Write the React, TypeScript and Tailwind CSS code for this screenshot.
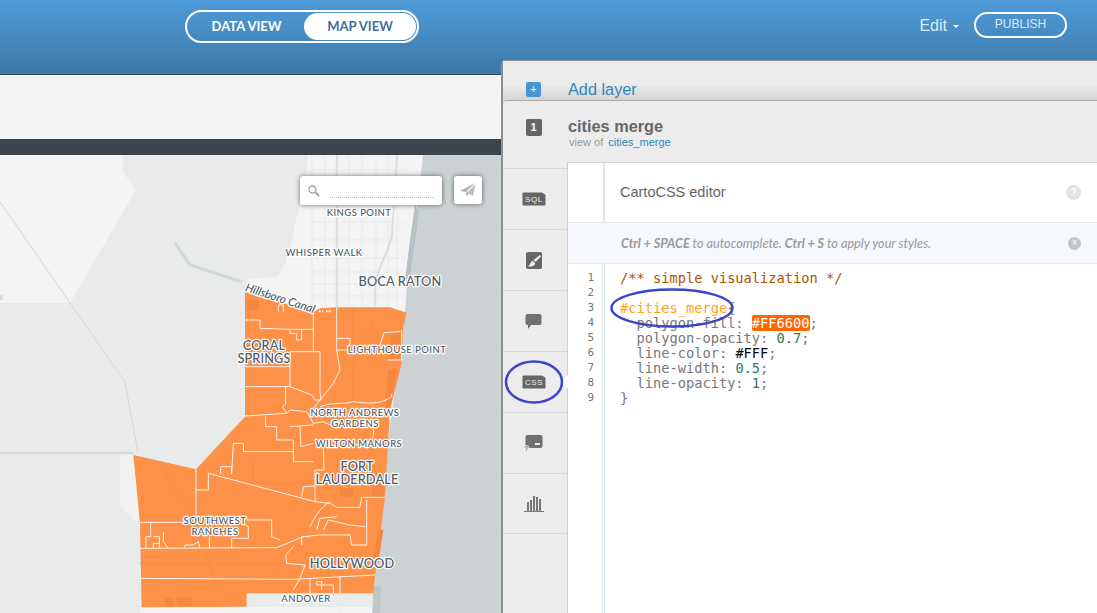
import React from 'react';

const sans = 'font-["Liberation_Sans",Arial,sans-serif]';

// white boundaries of the polygon, in coordinates of a 3x crop, see the group transform below
const boundaries = [
  'M375 150H420V175L510 178H580',
  'M580 125V245H600V370L604 392',
  'M510 245H580M510 245V350',
  'M375 290H510M375 350H510L575 375L585 390L600 390',
  'M650 112V240L660 300L640 340L600 390L580 415',
  'M650 205H690V240H650',
  'M497 350V400L488 410L500 430L375 438',
  'M500 430L510 420L560 425L580 460L610 455L640 470',
  'M437 438V470H470V510H520V575H580',
  'M510 470L580 465M540 470L543 530L580 520',
  'M340 520H370V545H520M340 520L335 612',
  'M228 598V660H265V610L585 695',
  'M302 612V590H335V612',
  'M228 660V760M268 800V835',
  'M585 520L610 530L612 600H585V695',
  'M550 650L585 648M550 650L545 680',
  'M585 695L630 700L650 712H720L725 682H795',
  'M60 757H190M380 750H455V800L480 810',
  'M60 835L470 833L550 800L600 795H690L695 825H740V690',
  'M60 925L520 928L765 915',
  'M497 855L500 880L555 885L540 925L520 960M497 855L520 830',
  'M570 925V970M660 920V970M590 945H640V970M590 945V935H605V960',
  'M92 757V800H78V835M100 800H118V835M100 835V820H118M130 785V815L145 835',
  'M195 835V825H220L235 815L240 835M335 835V805H385V770L370 760',
  'M700 395C740 400 780 405 815 380V372',
  'M600 410C640 395 670 405 700 395M760 470V500C740 530 700 530 660 510',
  'M570 770C590 730 600 715 630 695M590 780L600 745L650 740M610 780L625 750L690 765L735 770',
  'M780 225L792 188L840 185M805 270H845V180',
  'M490 125V105H475V125',
  'M545 825V800H570M510 180V190H530V210H545V178',
];

const cityGridV = [312, 325, 336, 349, 362, 376, 388, 397];
const cityGridH = [170, 185, 203, 222, 240, 258, 272, 284, 296];

const MapCanvas = () => (
  <svg viewBox="0 155 502 458" className="block h-[458px] w-[502px]">
    <rect x="0" y="155" width="502" height="458" fill="#e9ebea" />
    <path d="M0 155H123V172L136 190L70 303H0Z" fill="#f4f4f2" />
    <path d="M308 155C306 180 300 205 296 220C292 240 290 260 277 277L248 279L245 292L245 420H402L423 155Z" fill="#f4f4f4" />
    <path d="M120 455H140L146 520L135 521L120 505Z" fill="#f1f2f1" />
    <path d="M140 607H372V613H140Z" fill="#f3f3f3" />
    <path d="M423 155L417 210L408 270L405 312L387 450L377 563L372 613H502V155Z" fill="#ccd1d3" />
    <path d="M415 205L419 212L412 262L409 285L405 280L410 240Z" fill="#b7c0c2" />
    <path d="M373 586H381L380 613H373Z" fill="#c0c6c8" />

    <g stroke="#e8e9e9" strokeWidth="1" fill="none">
      {cityGridV.map((x) => (
        <line key={x} x1={x} y1="155" x2={x} y2="307" />
      ))}
      {cityGridH.map((y) => (
        <line key={y} x1="312" y1={y} x2="405" y2={y} />
      ))}
      <path d="M312 595H372M312 606H372M340 595V613" />
    </g>
    <path d="M337 155V307" stroke="#dfdfdf" strokeWidth="2" fill="none" />
    <path d="M397 155L392 235C390 250 378 265 375 285V305" stroke="#dcdddd" strokeWidth="2" fill="none" />
    <path d="M0 202L125 382L138 453" stroke="#d4d6d4" strokeWidth="1" fill="none" />
    <path d="M0 453H133" stroke="#d8dad9" strokeWidth="2" fill="none" />
    <path d="M175 243L190 265L242 282" stroke="#d3d9da" strokeWidth="3" fill="none" />
    <rect x="0" y="295" width="3" height="5" fill="#dcdedc" />

    <g transform="translate(120 270) scale(0.33333)">
      <path
        d="M375 65L580 125L600 115L650 112H810L860 128L850 170L845 280L810 420L795 680L770 880L760 970H380V1010L65 1012L60 760L40 555L228 598L375 440Z"
        fill="#fd9148"
      />
      <g fill="#f6873f">
        <path d="M815 190H845L840 270H808Z" />
        <path d="M805 300H830L810 420H795Z" />
        <path d="M660 655H700V680H660Z" />
        <path d="M760 640H795L790 680H755Z" />
        <path d="M775 780H790L775 880H760Z" />
        <path d="M135 985H160V1010H135ZM170 980H215V1008H170Z" />
        <path d="M380 90H415V120H380Z" />
      </g>
      <g stroke="#f88b44" strokeWidth="3" fill="none">
        <path d="M60 880H490M380 640H580M400 570V640M130 600C160 660 180 700 220 720M260 850L290 960M700 112V390M760 150L700 300" />
      </g>
      <g stroke="#fff5ee" strokeWidth="3" fill="none">
        {boundaries.map((d) => (
          <path key={d} d={d} />
        ))}
      </g>
      <path d="M597 124H636" stroke="#fff" strokeWidth="6" strokeDasharray="5 4 3 8 6 3" fill="none" />
    </g>

    <g
      className='font-["Lato",sans-serif]'
      fill="#4d5b69"
      stroke="#ffffff"
      strokeWidth="2.5"
      strokeLinejoin="round"
      paintOrder="stroke"
      textAnchor="middle"
      fontWeight="500"
    >
      <g fontSize="9.5" letterSpacing="0.45">
        <text x="359" y="216">KINGS POINT</text>
        <text x="324" y="256">WHISPER WALK</text>
        <text x="397" y="353">LIGHTHOUSE POINT</text>
        <text x="355" y="416">NORTH ANDREWS</text>
        <text x="355" y="427">GARDENS</text>
        <text x="359" y="447">WILTON MANORS</text>
        <text x="215" y="524">SOUTHWEST</text>
        <text x="215" y="535">RANCHES</text>
        <text x="306" y="602">ANDOVER</text>
      </g>
      <g fontSize="12.8" letterSpacing="0.1">
        <text x="400" y="286">BOCA RATON</text>
        <text x="264" y="350">CORAL</text>
        <text x="264" y="363">SPRINGS</text>
        <text x="357" y="471">FORT</text>
        <text x="357" y="484">LAUDERDALE</text>
        <text x="352" y="568">HOLLYWOOD</text>
      </g>
      <text x="279" y="302" fontSize="11.5" fontStyle="italic" transform="rotate(18 279 302)">Hillsboro Canal</text>
    </g>
  </svg>
);

const TabIcon = ({ name }: { name: string }) => {
  if (name === 'sql' || name === 'css') {
    return (
      <svg width="24" height="14" viewBox="0 0 24 14">
        <path d="M1 1H20L23 3V13H1Z" fill="#666" stroke="#666" strokeLinejoin="round" />
        <text x="12" y="10" textAnchor="middle" fontSize="8" letterSpacing="0.6" fill="#eee" className={sans}>
          {name.toUpperCase()}
        </text>
      </svg>
    );
  }
  if (name === 'brush') {
    return (
      <svg width="16" height="17" viewBox="0 0 16 17">
        <rect width="16" height="17" rx="2" fill="#666" />
        <path d="M14 3L7.500 8L9.500 10L15 4.500Z" fill="#eee" />
        <path d="M7 9C4 9 5.500 12.500 2 14C5.500 15.500 9.500 13.500 9 11Z" fill="#eee" />
      </svg>
    );
  }
  if (name === 'comment') {
    return (
      <svg width="17" height="17" viewBox="0 0 17 17">
        <path d="M2.500 1H14.500A2 2 0 0 1 16.500 3V10A2 2 0 0 1 14.500 12H6L3 16V12H2.500A2 2 0 0 1 .5 10V3A2 2 0 0 1 2.500 1Z" fill="#707070" />
      </svg>
    );
  }
  if (name === 'legend') {
    return (
      <svg width="19" height="16" viewBox="0 0 19 16">
        <rect x="1.500" y="0" width="17" height="13" rx="2" fill="#707070" />
        <rect x="11" y="8" width="5" height="2" fill="#eee" />
        <text x="2.500" y="15.500" textAnchor="middle" fontSize="8" fontWeight="700" fill="#8a8a8a" stroke="#ececec" strokeWidth="1.500" paintOrder="stroke" className={sans}>
          ?
        </text>
      </svg>
    );
  }
  return (
    <svg width="20" height="16" viewBox="0 0 20 16">
      <path d="M0 15.500H20" stroke="#777" />
      <rect x="3" y="6" width="2" height="9" fill="#777" />
      <rect x="6" y="4" width="2" height="11" fill="#777" />
      <rect x="9" y="0" width="2" height="15" fill="#777" />
      <rect x="12" y="1" width="2" height="14" fill="#777" />
      <rect x="15" y="3" width="2" height="12" fill="#777" />
    </svg>
  );
};

const tabs = ['sql', 'brush', 'comment', 'css', 'legend', 'bars'];

const CodeLine = ({ n, children }: { n: number; children?: React.ReactNode }) => (
  <div className="flex h-[15px] items-center">
    <span className="w-[34px] shrink-0 pr-[9px] text-right text-[11px] text-[#777]">{n}</span>
    <span className="ml-[17px] whitespace-pre">{children}</span>
  </div>
);

const App = () => {
  return (
    <div className={`relative flex h-[613px] w-[1097px] flex-col overflow-hidden bg-white ${sans}`}>
      <header className="flex h-[75px] shrink-0 items-start border-b border-[#32485c] bg-gradient-to-b from-[#4f9cd9] to-[#3c78aa] pl-[185px] pr-[30px] pt-[10px]">
        <div className="flex h-[33px] w-[234px] items-center rounded-full border-2 border-white p-[1px] font-['Lato',sans-serif] text-[13px] font-bold">
          <span className="flex-1 pl-[1px] text-center text-white">DATA VIEW</span>
          <span className="flex h-full w-[112px] items-center justify-center rounded-full bg-white text-[#3f6d9c]">
            MAP VIEW
          </span>
        </div>
        <div className="ml-auto flex items-center pt-[1px]">
          <span className="mt-[3px] text-[16px] font-light text-[#dceaf5]">Edit</span>
          <span className="ml-[6px] mt-[4px] h-0 w-0 border-x-[3px] border-t-[3px] border-x-transparent border-t-white" />
          <button className="ml-[15px] flex h-[26px] w-[93px] items-center justify-center rounded-full border-2 border-white pb-[2px] text-[12px] text-[#dceaf5]">
            PUBLISH
          </button>
        </div>
      </header>
      <div className="h-[64px] shrink-0 bg-[#f4f4f4]" />
      <div className="h-[16px] shrink-0 bg-[#3a464c]" />

      <div className="relative min-h-0 flex-1">
        <MapCanvas />
        <div className="absolute left-[300px] top-[21px] flex h-[29px] w-[142px] items-center rounded-[3px] bg-white pl-[8px] shadow-[0_0_5px_rgba(0,0,0,0.55)]">
          <svg width="12" height="12" viewBox="0 0 12 12" fill="none" stroke="#a3a3a3">
            <circle cx="4.500" cy="4.500" r="3.500" strokeWidth="1.300" />
            <path d="M7.500 7.500L11 11" strokeWidth="2" />
          </svg>
          <span className="ml-[10px] mt-[13px] h-0 w-[103px] border-b border-dotted border-[#bbb]" />
        </div>
        <div className="absolute left-[454px] top-[21px] flex h-[28px] w-[28px] items-center justify-center rounded-[3px] bg-white shadow-[0_0_5px_rgba(0,0,0,0.55)]">
          <svg width="16" height="14" viewBox="0 0 16 14">
            <path d="M0 8L15 0L6 9Z" fill="#b0b0ae" />
            <path d="M7 9.500L15.500 1L13 13Z" fill="#bdbdbb" />
            <path d="M6 9L7 13.500L8.500 10.500Z" fill="#999" />
          </svg>
        </div>
      </div>

      <aside className="absolute bottom-0 left-[501px] right-0 top-[60px] flex flex-col rounded-tl-[4px] border-l-2 border-t border-[#8f8f8f] bg-[#ececec]">
        <div className="flex h-[39px] shrink-0 items-end bg-gradient-to-b from-[#ececec] from-60% to-[#d4d4d4]">
          <div className="flex w-[65px] justify-center pb-[3px] pr-[4px]">
            <span className="flex h-[15px] w-[15px] items-center justify-center rounded-[2px] bg-[#4a94d0] text-[11px] leading-none text-white">
              +
            </span>
          </div>
          <span className="pb-[1px] text-[16.300px] leading-[20px] text-[#2f86bb]">Add layer</span>
        </div>

        <div className="flex min-h-0 flex-1 flex-col rounded-tl-[4px] border-t border-[#aaa] bg-[#ececec]">
          <div className="flex h-[61px] shrink-0">
            <div className="flex w-[65px] justify-center pt-[18px] pr-[4px]">
              <span className="flex h-[17px] w-[16px] items-center justify-center rounded-[2px] bg-[#666] text-[11px] font-bold text-white">
                1
              </span>
            </div>
            <div className="pt-[15px]">
              <div className="text-[16.300px] font-bold leading-[20px] text-[#666]">cities merge</div>
              <div className="ml-[1px] text-[11px] leading-[13px] text-[#999]">
                view of <span className="ml-[2px] text-[#2f86bb]">cities_merge</span>
              </div>
            </div>
          </div>

          <div className="flex min-h-0 flex-1">
            <nav className="w-[65px] shrink-0 border-r border-[#d0d0d0] pt-[6px]">
              {tabs.map((t) => (
                <div key={t} className="relative flex h-[61px] items-center justify-center border-t border-[#d8d8d8] pr-[3px] last:border-b">
                  <TabIcon name={t} />
                  {t === 'css' && (
                    <span className="absolute -right-[1px] top-[23px] h-0 w-0 border-y-[7px] border-r-[7px] border-y-transparent border-r-white" />
                  )}
                </div>
              ))}
            </nav>
            <main className="flex min-w-0 flex-1 flex-col bg-white">
              <div className="flex h-[61px] shrink-0 items-center justify-between border-b border-t border-b-[#e4e8ee] border-t-[#d5d5d5] pr-[16px]">
                <div className="flex h-full">
                  <div className="h-full w-[37px] border-r-2 border-[#dde6ec]" />
                  <span className="ml-[15px] self-center text-[14.500px] text-[#666]">CartoCSS editor</span>
                </div>
                <span className="flex h-[15px] w-[15px] items-center justify-center rounded-full bg-[#e2e2e2] text-[11px] font-bold text-white">?</span>
              </div>
              <div className="flex h-[41px] shrink-0 items-center justify-between border-b border-[#e8ecf2] bg-[#f5f8fd] pl-[53px] pr-[16px]">
                <span className="mt-[1px] font-['Lato',sans-serif] text-[12.700px] italic text-[#999]">
                  <b>Ctrl + SPACE</b> to autocomplete. <b>Ctrl + S</b> to apply your styles.
                </span>
                <span className="flex h-[13px] w-[13px] items-center justify-center rounded-full bg-[#c4c4c4] text-[10px] leading-none text-white">×</span>
              </div>
              <div className="relative min-h-0 flex-1 pt-[7px] pl-[1px] font-['DejaVu_Sans_Mono',monospace] text-[13.700px] text-[#777]">
                <div className="absolute bottom-0 left-[34px] top-0 w-[3px] border-x border-l-[#e6e6e6] border-r-[#cfe2f0]" />
                <CodeLine n={1}><span className="text-[#a85500]">/** simple visualization */</span></CodeLine>
                <CodeLine n={2} />
                <CodeLine n={3}><span className="text-[#ffa31a]">#cities_merge</span>{'{'}</CodeLine>
                <CodeLine n={4}>
                  {'  polygon-fill: '}
                  <span className="rounded-[2px] bg-[#ff6600] text-white">#FF6600</span>;
                </CodeLine>
                <CodeLine n={5}>{'  polygon-opacity: '}<span className="text-[#2a7a5a]">0.7</span>;</CodeLine>
                <CodeLine n={6}>{'  line-color: '}<span className="text-black">#FFF</span>;</CodeLine>
                <CodeLine n={7}>{'  line-width: '}<span className="text-[#2a7a5a]">0.5</span>;</CodeLine>
                <CodeLine n={8}>{'  line-opacity: '}<span className="text-[#2a7a5a]">1</span>;</CodeLine>
                <CodeLine n={9}>{'}'}</CodeLine>
              </div>
            </main>
          </div>
        </div>
      </aside>

      {/* hand-drawn annotations on top of the screenshot */}
      <svg className="pointer-events-none absolute left-0 top-0" width="1097" height="613">
        <ellipse cx="672" cy="308" rx="60.500" ry="18.500" fill="none" stroke="#3a45cc" strokeWidth="2.500" />
        <ellipse cx="534" cy="382" rx="28" ry="20.500" fill="none" stroke="#3a45cc" strokeWidth="2.500" />
      </svg>
    </div>
  );
};

export default App;
